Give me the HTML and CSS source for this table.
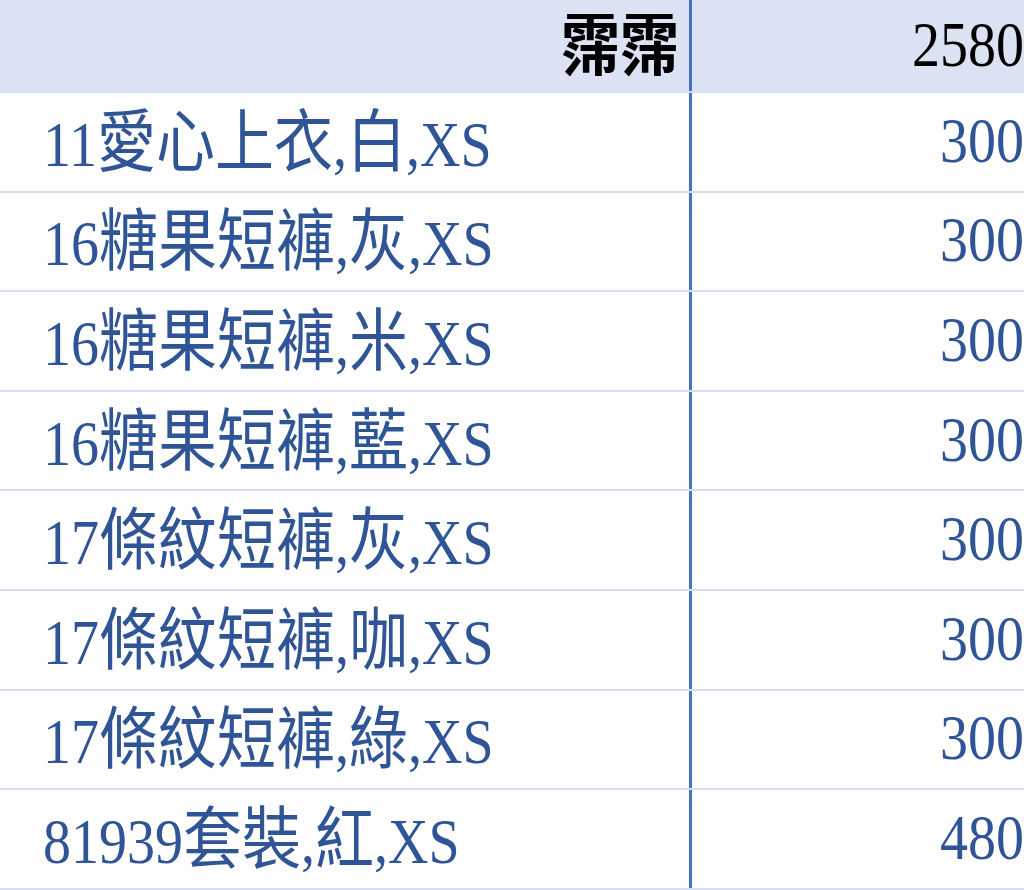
FILE: index.html
```html
<!DOCTYPE html>
<html lang="zh-Hant">
<head>
<meta charset="utf-8">
<title>Sheet</title>
<link rel="stylesheet" href="styles.css">
</head>
<body>
<div class="sheet">
  <div class="row head">
    <div class="cell name"><span class="txt"><span class="c">霈霈</span></span></div>
    <div class="cell qty"><span class="txt">2580</span></div>
  </div>
  <div class="row">
    <div class="cell name left"><span class="txt">11<span class="c">愛心上衣</span>,<span class="c">白</span>,XS</span></div>
    <div class="cell qty"><span class="txt">300</span></div>
  </div>
  <div class="row">
    <div class="cell name left"><span class="txt">16<span class="c">糖果短褲</span>,<span class="c">灰</span>,XS</span></div>
    <div class="cell qty"><span class="txt">300</span></div>
  </div>
  <div class="row">
    <div class="cell name left"><span class="txt">16<span class="c">糖果短褲</span>,<span class="c">米</span>,XS</span></div>
    <div class="cell qty"><span class="txt">300</span></div>
  </div>
  <div class="row">
    <div class="cell name left"><span class="txt">16<span class="c">糖果短褲</span>,<span class="c">藍</span>,XS</span></div>
    <div class="cell qty"><span class="txt">300</span></div>
  </div>
  <div class="row">
    <div class="cell name left"><span class="txt">17<span class="c">條紋短褲</span>,<span class="c">灰</span>,XS</span></div>
    <div class="cell qty"><span class="txt">300</span></div>
  </div>
  <div class="row">
    <div class="cell name left"><span class="txt">17<span class="c">條紋短褲</span>,<span class="c">咖</span>,XS</span></div>
    <div class="cell qty"><span class="txt">300</span></div>
  </div>
  <div class="row">
    <div class="cell name left"><span class="txt">17<span class="c">條紋短褲</span>,<span class="c">綠</span>,XS</span></div>
    <div class="cell qty"><span class="txt">300</span></div>
  </div>
  <div class="row">
    <div class="cell name left"><span class="txt">81939<span class="c">套裝</span>,<span class="c">紅</span>,XS</span></div>
    <div class="cell qty"><span class="txt">480</span></div>
  </div>
</div>
</body>
</html>
```
FILE: styles.css
```css
html, body {
  margin: 0;
  padding: 0;
  background: #ffffff;
  overflow: hidden;
}
body {
  width: 1024px;
  height: 890px;
}
.sheet {
  width: 1036px;
  font-family: "Liberation Serif", "Noto Sans CJK TC", serif;
  font-size: 56px;
  color: #2f5597;
}
.row {
  display: grid;
  grid-template-columns: 692px 1fr;
  height: 99.6px;
  box-sizing: border-box;
  border-bottom: 2px solid #d6def1;
}
.row.head {
  height: 93px;
  background: #dae2f3;
  color: #000000;
}
.cell {
  display: flex;
  align-items: center;
  justify-content: flex-end;
  padding: 0 12px;
  box-sizing: border-box;
  white-space: nowrap;
}
.cell.name {
  border-right: 3px solid #4472c4;
  padding-right: 10px;
}
.cell.left {
  justify-content: flex-start;
  padding-left: 43px;
}
.txt {
  display: inline-block;
  transform: scaleY(1.15);
  transform-origin: center;
  line-height: 1.25;
  position: relative;
  top: -2px;
}
.c {
  font-family: "Noto Sans CJK TC", sans-serif;
  font-size: 59px;
}
.head .txt {
  top: -1px;
  line-height: 1.05;
}
.head .c {
  font-weight: bold;
}
```
